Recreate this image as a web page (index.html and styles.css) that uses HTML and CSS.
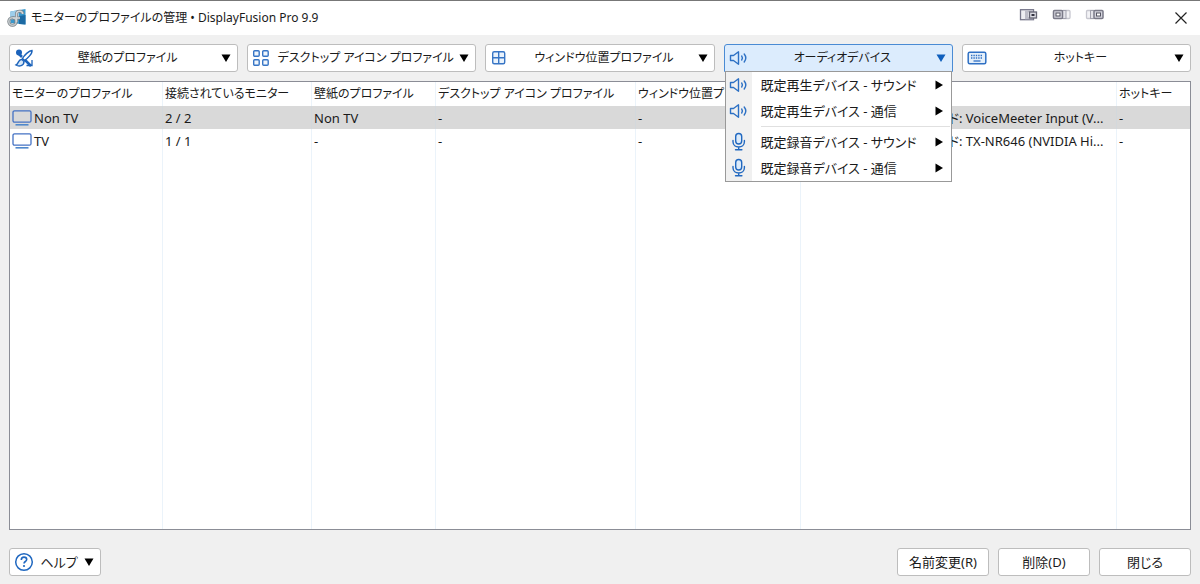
FILE: index.html
```html
<!DOCTYPE html>
<html lang="ja">
<head>
<meta charset="utf-8">
<title>モニターのプロファイルの管理 • DisplayFusion Pro 9.9</title>
<link rel="stylesheet" href="styles.css">
</head>
<body>
<svg class="symbols" aria-hidden="true">
  <symbol id="sound" viewBox="0 0 20 20"><path d="M1.5 7.500h3l5-3.700v12.400l-5-3.700h-3zM12.700 8q1.400 2 0 4M15.200 6q3.200 4 0 8" fill="none" stroke="#2c70c4" stroke-width="1.400" stroke-linejoin="round" stroke-linecap="round"/></symbol>
  <symbol id="mic" viewBox="0 0 20 20"><rect x="6.700" y="1.500" width="6" height="10.500" rx="3" fill="#dcebfa" stroke="#2068c0" stroke-width="1.400"/><path d="M4 8.500v1.200c0 7 11.400 7 11.400 0V8.500M9.700 15v2.600M6.500 17.800h6.400" fill="none" stroke="#2068c0" stroke-width="1.400" stroke-linecap="round"/></symbol>
  <symbol id="monitor" viewBox="0 0 20 18"><rect x="1" y="1.800" width="18" height="11.400" rx="1.500" fill="none" stroke="#4472c4" stroke-width="1.300"/><path d="M3.500 15.800h13" stroke="#4f88cc" stroke-width="1.600"/></symbol>
  <symbol id="down" viewBox="0 0 10 8"><path d="M.5.5h9L5 8z" fill="currentColor"/></symbol>
  <symbol id="right" viewBox="0 0 8 10"><path d="M.5.5v9L8 5z" fill="currentColor"/></symbol>
</svg>
<div class="window">
  <header class="titlebar">
    <svg class="app-icon" viewBox="0 0 20 20" aria-hidden="true"><path d="M3.500 3.500 18.500 1v15.500L3.500 15z" fill="#3a97cb"/><path d="M3.500 3.500 12 2v7l-8.500 3z" fill="#9dcdea"/><path d="M12 8l6.500-1v9.500L12 16z" fill="#1c6aa3"/><circle cx="5.500" cy="13.500" r="3.700" fill="none" stroke="#7b8287" stroke-width="3"/><path d="M9.500 14V6.500q0-3.500 3.500-3.200 2.700.3 2.700 2.700M6 10h7" fill="none" stroke="#7b8287" stroke-width="3"/><circle cx="5.500" cy="13.500" r="3.700" fill="none" stroke="#c3c9cc" stroke-width="1.600"/><path d="M9.500 14V6.500q0-3.500 3.500-3.200 2.700.3 2.700 2.700M6 10h7" fill="none" stroke="#d0d6da" stroke-width="1.600"/></svg>
    <h1 class="title">モニターのプロファイルの管理 • DisplayFusion Pro 9.9</h1>
    <div class="title-tools">
      <button class="title-tool" aria-label="モニターに広げる"><svg viewBox="0 0 20 14"><rect x="1.500" y="1.700" width="13" height="10" fill="#eeeef2" stroke="#77778a" stroke-width="1.300"/><path d="M6 2.300h8v2H9v5h5v2H6z" fill="#bdbdc8"/><rect x="10.500" y="4" width="7" height="6" fill="#dcdce3" stroke="#666674" stroke-width="1.300"/><path d="M12.500 7h3" stroke="#333340" stroke-width="2"/></svg></button>
      <button class="title-tool" aria-label="前のモニターへ"><svg viewBox="0 0 20 14"><rect x="10" y="2.500" width="8" height="8" rx="1" fill="#f3f3f6" stroke="#c7c7cf" stroke-width="1.300"/><rect x="7" y="2.500" width="7" height="8" fill="#e4e4ea" stroke="#a1a1ad"/><rect x="1.500" y="2.500" width="9" height="8" rx="1" fill="#d4d4dd" stroke="#7a7a88" stroke-width="1.500"/><rect x="4" y="5" width="4" height="3" fill="#fff" stroke="#555563"/></svg></button>
      <button class="title-tool" aria-label="次のモニターへ"><svg viewBox="0 0 20 14"><rect x="1.500" y="2.500" width="8" height="8" rx="1" fill="#f3f3f6" stroke="#c7c7cf" stroke-width="1.300"/><rect x="5.500" y="2.500" width="7" height="8" fill="#e4e4ea" stroke="#a1a1ad"/><rect x="9" y="2.500" width="9" height="8" rx="1" fill="#d4d4dd" stroke="#7a7a88" stroke-width="1.500"/><rect x="11.500" y="5" width="4" height="3" fill="#fff" stroke="#555563"/></svg></button>
    </div>
    <button class="close" aria-label="ウィンドウを閉じる"><svg viewBox="0 0 12 12"><path d="M.5.5l11 11M11.500.5l-11 11" stroke="#222" stroke-width="1.200"/></svg></button>
  </header>
  <main class="content">
    <nav class="toolbar">
      <div class="slot"><button class="button dropdown">
        <svg class="icon" viewBox="0 0 20 20" aria-hidden="true"><circle cx="5" cy="4.500" r="3" fill="#1c63bb"/><path d="M4 5l4 4M11 12l6 6" stroke="#1c63bb" stroke-width="2.600"/><path d="M18 2.500c-3 0-8 5-9.500 8l2 2c3-2 8-7 7.500-10z" fill="#fff" stroke="#1c63bb" stroke-width="1.400"/><path d="M8 11.500c-4-.5-3 4-6 5.500 3 2 8 1 8-3.500z" fill="#d7e8f8" stroke="#1c63bb" stroke-width="1.400"/><path d="M12.500 17.500H18V12" fill="none" stroke="#1c63bb" stroke-width="1.300"/></svg>
        <span class="label">壁紙のプロファイル</span><svg class="arrow"><use href="#down"/></svg></button></div>
      <div class="slot"><button class="button dropdown">
        <svg class="icon" viewBox="0 0 20 20" fill="#f0f6fc" stroke="#3775c5" stroke-width="1.400" aria-hidden="true"><rect x="1.700" y="2.700" width="5.500" height="5.500" rx="1"/><rect x="10.700" y="2.700" width="5.500" height="5.500" rx="1"/><rect x="1.700" y="11.700" width="5.500" height="5.500" rx="1"/><rect x="10.700" y="11.700" width="5.500" height="5.500" rx="1"/></svg>
        <span class="label">デスクトップ アイコン プロファイル</span><svg class="arrow"><use href="#down"/></svg></button></div>
      <div class="slot"><button class="button dropdown">
        <svg class="icon" viewBox="0 0 20 20" fill="#eaf3fc" stroke="#3775c5" stroke-width="1.400" aria-hidden="true"><rect x="2.700" y="3.700" width="12" height="12" rx="1.500"/><path d="M8.700 3.700v12M2.700 9.700h12"/></svg>
        <span class="label">ウィンドウ位置プロファイル</span><svg class="arrow"><use href="#down"/></svg></button></div>
      <div class="slot"><button class="button dropdown open" aria-haspopup="menu" aria-expanded="true">
        <svg class="icon"><use href="#sound"/></svg>
        <span class="label">オーディオデバイス</span><svg class="arrow"><use href="#down"/></svg></button>
        <div class="menu" role="menu">
          <button class="menu-item" role="menuitem"><svg class="icon"><use href="#sound"/></svg><span class="menu-label">既定再生デバイス - サウンド</span><svg class="sub"><use href="#right"/></svg></button>
          <button class="menu-item" role="menuitem"><svg class="icon"><use href="#sound"/></svg><span class="menu-label">既定再生デバイス - 通信</span><svg class="sub"><use href="#right"/></svg></button>
          <div class="separator" role="separator"></div>
          <button class="menu-item" role="menuitem"><svg class="icon"><use href="#mic"/></svg><span class="menu-label">既定録音デバイス - サウンド</span><svg class="sub"><use href="#right"/></svg></button>
          <button class="menu-item" role="menuitem"><svg class="icon"><use href="#mic"/></svg><span class="menu-label">既定録音デバイス - 通信</span><svg class="sub"><use href="#right"/></svg></button>
        </div></div>
      <div class="slot"><button class="button dropdown">
        <svg class="icon" viewBox="0 0 20 20" aria-hidden="true"><rect x="1.200" y="4.200" width="17.600" height="11.600" rx="1.500" fill="#e4effa" stroke="#2f70c4" stroke-width="1.500"/><path d="M4 7.500h12M4 10h12" stroke="#2f70c4" stroke-width="1.300" stroke-dasharray="1.400 1"/><path d="M6.500 13h7" stroke="#2f70c4" stroke-width="1.300"/></svg>
        <span class="label">ホットキー</span><svg class="arrow"><use href="#down"/></svg></button></div>
    </nav>
    <div class="list">
      <table class="profiles">
        <colgroup><col class="c-name"><col class="c-count"><col class="c-wall"><col class="c-desk"><col class="c-pos"><col class="c-audio"><col class="c-key"></colgroup>
        <thead><tr><th>モニターのプロファイル</th><th>接続されているモニター</th><th>壁紙のプロファイル</th><th>デスクトップ アイコン プロファイル</th><th>ウィンドウ位置プロファイル</th><th>オーディオデバイス</th><th>ホットキー</th></tr></thead>
        <tbody>
          <tr class="row selected"><td><span class="name"><svg class="screen"><use href="#monitor"/></svg>Non TV</span></td><td>2 / 2</td><td>Non TV</td><td>-</td><td>-</td><td>既定再生デバイス - サウンド: VoiceMeeter Input (V...</td><td>-</td></tr>
          <tr class="row"><td><span class="name"><svg class="screen"><use href="#monitor"/></svg>TV</span></td><td>1 / 1</td><td>-</td><td>-</td><td>-</td><td>既定再生デバイス - サウンド: TX-NR646 (NVIDIA Hi...</td><td>-</td></tr>
          <tr class="filler"><td></td><td></td><td></td><td></td><td></td><td></td><td></td></tr>
        </tbody>
      </table>
    </div>
    <footer class="actions">
      <button class="button help"><svg class="icon" viewBox="0 0 20 20" aria-hidden="true"><circle cx="10" cy="10" r="8.300" fill="#fff" stroke="#2068c0" stroke-width="1.500"/><path d="M7.300 8c0-4 5.400-3.500 5.400-.5 0 2-2.700 2-2.700 4" fill="none" stroke="#2068c0" stroke-width="1.600"/><circle cx="10" cy="14" r="1.100" fill="#2068c0"/></svg><span class="label">ヘルプ</span><svg class="arrow"><use href="#down"/></svg></button>
      <div class="action-group">
        <button class="button action">名前変更(R)</button>
        <button class="button action">削除(D)</button>
        <button class="button action">閉じる</button>
      </div>
    </footer>
  </main>
</div>
</body>
</html>
```
FILE: styles.css
```css
* { box-sizing: border-box; }
body { margin: 0; background: #f0f0f0; color: #1a1a1a; font: 13px/20px "Noto Sans", "Noto Sans CJK JP", sans-serif; font-feature-settings: "palt"; }
button { font: inherit; font-feature-settings: inherit; color: inherit; margin: 0; padding: 0; border: 0; background: none; }
svg { display: block; flex: none; }
.symbols { position: absolute; width: 0; height: 0; }
.window { display: flex; flex-direction: column; height: 100vh; min-height: 320px; border-top: 1px solid #777; }
.titlebar { display: flex; flex: none; align-items: center; height: 34px; padding: 0 13px 0 7px; background: #fff; }
.app-icon { width: 20px; height: 20px; }
.title { flex: 1; margin: 0 0 0 4px; font-size: 12px; font-weight: 400; white-space: nowrap; }
.title-tools { display: flex; gap: 13px; margin: 0 70px 6px 0; }
.title-tool { width: 20px; height: 14px; }
.close { width: 12px; height: 12px; }
.content { flex: 1; min-height: 0; display: flex; flex-direction: column; padding: 9px 9px 8px; }
.toolbar { display: flex; gap: 9px; }
.slot { position: relative; flex: 1 1 0; min-width: 0; }
.button { display: flex; align-items: center; height: 28px; background: #fff; border: 1px solid #bdbdbd; border-radius: 3px; }
.dropdown { width: 100%; padding: 0 6px 0 4px; font-size: 12px; }
.icon { width: 20px; height: 20px; }
.label { flex: 1; text-align: center; white-space: nowrap; }
.arrow { width: 10px; height: 8px; color: #000; }
.open { background: #dcecfd; border-color: #4a8bd4; border-radius: 3px 3px 0 0; }
.open .arrow { color: #0f5fbd; }
.menu { position: absolute; z-index: 2; top: 27px; left: 1px; right: 1px; border: 1px solid #999; background: linear-gradient(90deg, #f0f0f0 26px, #fff 26px); }
.menu-item { display: flex; align-items: center; width: 100%; height: 26px; padding: 0 8px 0 3px; text-align: left; }
.menu-label { flex: 1; margin-left: 12px; white-space: nowrap; }
.sub { width: 8px; height: 10px; color: #000; }
.separator { height: 1px; margin: 2px 1px 2px 35px; background: #e0e0e0; }
.list { flex: 1; min-height: 0; margin-top: 9px; border: 1px solid #8b8d96; background: #fff; }
.profiles { width: 100%; height: 100%; border-collapse: separate; border-spacing: 0; table-layout: fixed; }
.c-name { width: 153px; }
.c-count { width: 149px; }
.c-wall { width: 124px; }
.c-desk { width: 200px; }
.c-pos { width: 165px; }
.c-key { width: 73px; }
.profiles th { height: 24px; padding: 0 2px; font-size: 12px; font-weight: 400; text-align: left; white-space: nowrap; overflow: hidden; }
.profiles td { padding: 0 2px; white-space: nowrap; overflow: hidden; }
.profiles th, .profiles td { border-right: 1px solid #ebf3fa; }
.profiles th:last-child, .profiles td:last-child { border-right: 0; }
.row td { height: 23px; }
.selected td { background: #d9d9d9; border-right-color: #d3d8dc; }
.name { display: flex; align-items: center; gap: 2px; }
.screen { width: 20px; height: 18px; }
.filler td { height: 100%; }
.actions { display: flex; justify-content: space-between; margin-top: 18px; }
.help { width: 92px; padding: 0 6px 0 4px; }
.action-group { display: flex; gap: 9px; }
.action { width: 92px; justify-content: center; }
```
